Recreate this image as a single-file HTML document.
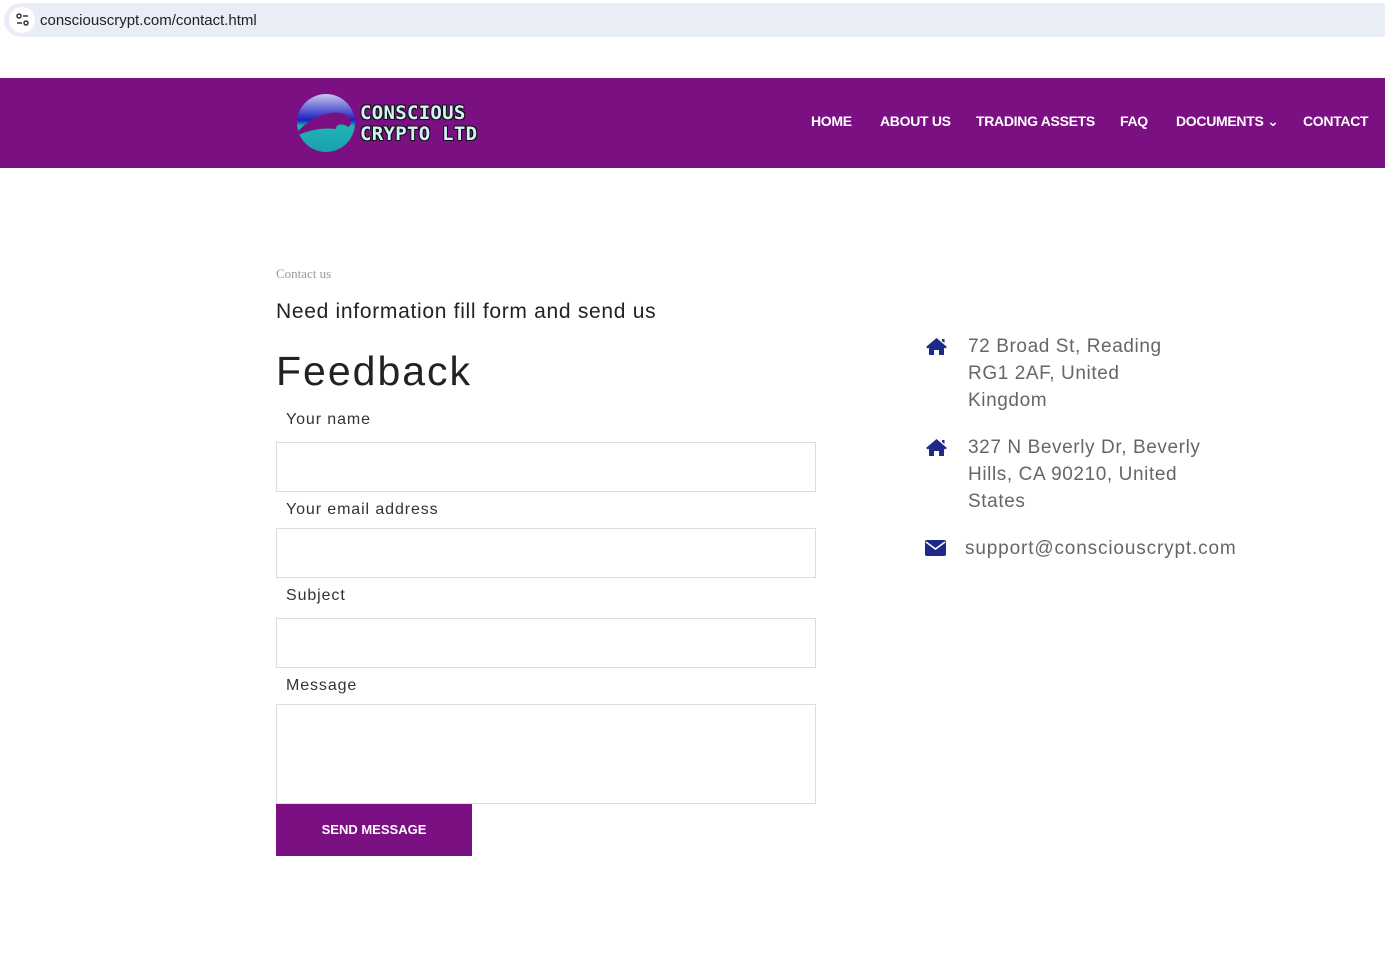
<!DOCTYPE html>
<html><head><meta charset="utf-8"><style>
*{margin:0;padding:0;box-sizing:border-box}
body{width:1385px;height:967px;background:#fff;font-family:"Liberation Sans","DejaVu Sans",sans-serif;position:relative;overflow:hidden;color:#222}
.abs{position:absolute}
.url{left:4px;top:3px;width:1381px;height:34px;background:#e9edf6;border-radius:17px 0 0 17px}
.url .ic{position:absolute;left:5px;top:4px;width:26px;height:26px;border-radius:13px;background:#fff}
.url span{position:absolute;left:36px;top:9px;font-size:15px;color:#222}
.nav{left:0;top:78px;width:1385px;height:90px;background:#7b1083}
.nav a{position:absolute;top:35px;color:#fff;font-weight:bold;font-size:14px;text-decoration:none;letter-spacing:-0.3px}
.logo-t{position:absolute;left:360px;color:#cff3f4;font-weight:bold;font-size:19px;letter-spacing:0.3px;font-family:"DejaVu Sans Mono","Liberation Mono",monospace;text-shadow:1px 1px 0 #111,-1px -1px 0 #111,1px -1px 0 #111,-1px 1px 0 #111}
.lbl{position:absolute;left:286px;font-size:16px;color:#333;letter-spacing:0.9px}
.inp{position:absolute;left:276px;width:540px;height:50px;border:1px solid #ddd}
.info{position:absolute;left:968px;font-size:19px;line-height:27px;color:#666;letter-spacing:0.6px}
</style></head><body>
<div class="abs url"><div class="ic"><svg width="26" height="26" viewBox="0 0 26 26"><circle cx="10" cy="9" r="2" fill="none" stroke="#333" stroke-width="1.5"/><line x1="14" y1="9" x2="19" y2="9" stroke="#333" stroke-width="1.5"/><line x1="8" y1="16" x2="13" y2="16" stroke="#333" stroke-width="1.5"/><circle cx="17" cy="16" r="2" fill="none" stroke="#333" stroke-width="1.5"/></svg></div><span>consciouscrypt.com/contact.html</span></div>
<div class="abs nav">
<svg style="position:absolute;left:296px;top:15px" width="62" height="60" viewBox="0 0 62 60"><defs><linearGradient id="g" x1="0" y1="0" x2="0" y2="1"><stop offset="0" stop-color="#c9c6f0"/><stop offset=".45" stop-color="#1a1fc0"/><stop offset=".55" stop-color="#20b3b3"/><stop offset="1" stop-color="#1aa0b0"/></linearGradient></defs><circle cx="30" cy="30" r="29" fill="url(#g)"/><path d="M2 38 C15 25 30 18 45 20 C55 22 58 30 52 34 C48 30 40 30 40 36 C25 34 12 38 2 42Z" fill="#7b1083"/></svg>
<div class="logo-t" style="top:24px">CONSCIOUS</div>
<div class="logo-t" style="top:45px">CRYPTO LTD</div>
<a style="left:811px">HOME</a><a style="left:880px">ABOUT US</a><a style="left:976px">TRADING ASSETS</a><a style="left:1120px">FAQ</a><a style="left:1176px">DOCUMENTS ⌄</a><a style="left:1303px">CONTACT</a>
</div>
<div class="abs" style="left:276px;top:266px;font-family:'Liberation Serif',serif;font-size:13px;color:#999">Contact us</div>
<div class="abs" style="left:276px;top:300px;font-size:21px;color:#222;letter-spacing:0.7px">Need information fill form and send us</div>
<div class="abs" style="left:276px;top:348px;font-size:41px;color:#222;letter-spacing:2px">Feedback</div>
<div class="lbl" style="top:411px">Your name</div><div class="inp" style="top:442px"></div>
<div class="lbl" style="top:501px">Your email address</div><div class="inp" style="top:528px"></div>
<div class="lbl" style="top:587px">Subject</div><div class="inp" style="top:618px"></div>
<div class="lbl" style="top:677px">Message</div><div class="inp" style="top:704px;height:100px"></div>
<div class="abs" style="left:276px;top:804px;width:196px;height:52px;background:#7b1083;color:#fff;font-weight:bold;font-size:13px;text-align:center;line-height:52px">SEND MESSAGE</div>
<svg class="abs" style="left:925px;top:337px" width="23" height="19" viewBox="0 0 23 19"><path d="M11.5 1 L1 10 L3 11.5 L4 10.6 V18 H9 V13 H14 V18 H19 V10.6 L20 11.5 L22 10Z M17 2 H19.5 V6 L17 4Z" fill="#1e2a8a"/></svg>
<div class="info" style="top:333px">72 Broad St, Reading<br>RG1 2AF, United<br>Kingdom</div>
<svg class="abs" style="left:925px;top:438px" width="23" height="19" viewBox="0 0 23 19"><path d="M11.5 1 L1 10 L3 11.5 L4 10.6 V18 H9 V13 H14 V18 H19 V10.6 L20 11.5 L22 10Z M17 2 H19.5 V6 L17 4Z" fill="#1e2a8a"/></svg>
<div class="info" style="top:434px">327 N Beverly Dr, Beverly<br>Hills, CA 90210, United<br>States</div>
<svg class="abs" style="left:925px;top:540px" width="21" height="16" viewBox="0 0 21 16"><rect x="0" y="0" width="21" height="16" rx="2" fill="#1e2a8a"/><path d="M1 2 L10.5 9 L20 2" fill="none" stroke="#fff" stroke-width="1.6"/></svg>
<div class="info" style="left:965px;top:535px;letter-spacing:0.85px">support@consciouscrypt.com</div>
</body></html>
